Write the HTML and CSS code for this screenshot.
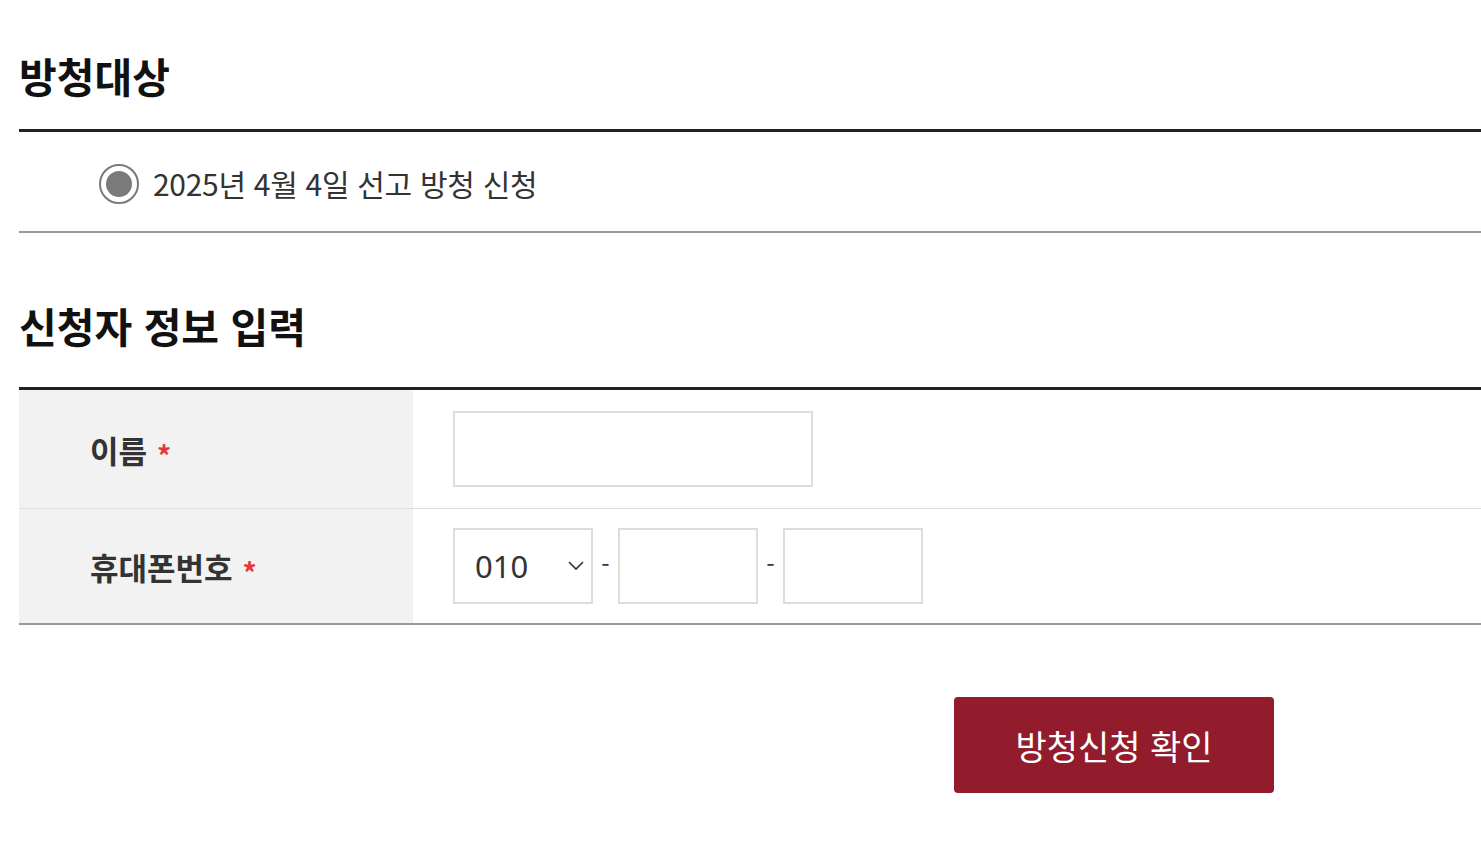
FILE: index.html
```html
<!DOCTYPE html>
<html lang="ko">
<head>
  <meta charset="UTF-8" />
  <title>방청신청</title>
  <link rel="stylesheet" href="styles.css">
</head>
<body>
<div class="wrap">
  <h2 class="sec-title">방청대상</h2>
  <div class="target-box">
    <label class="radio-item">
      <span class="radio-mark"><span class="radio-dot"></span></span>
      <span class="radio-text">2025년 4월 4일 선고 방청 신청</span>
    </label>
  </div>

  <h2 class="sec-title second">신청자 정보 입력</h2>
  <div class="form-table">
    <div class="form-row">
      <div class="form-th">이름 <span class="req">*</span></div>
      <div class="form-td">
        <input type="text" class="inp inp-name" />
      </div>
    </div>
    <div class="form-row">
      <div class="form-th">휴대폰번호 <span class="req">*</span></div>
      <div class="form-td">
        <div class="sel-wrap">
          <select class="sel">
            <option>010</option>
            <option>011</option>
            <option>016</option>
          </select>
          <svg class="sel-arrow" width="18" height="12" viewBox="0 0 18 12"><path d="M2 3 L9 10 L16 3" fill="none" stroke="#333" stroke-width="1.6"/></svg>
        </div>
        <span class="dash">-</span>
        <input type="text" class="inp inp-tel" />
        <span class="dash">-</span>
        <input type="text" class="inp inp-tel" />
      </div>
    </div>
  </div>

  <div class="btn-area">
    <button class="btn-submit">방청신청 확인</button>
  </div>
</div>
</body>
</html>
```

FILE: styles.css
```css
html, body {
  margin: 0;
  padding: 0;
  background: #fff;
  font-family: "Noto Sans CJK KR", "Noto Sans", sans-serif;
  color: #333;
}

.wrap {
  margin-left: 19px;
  padding-top: 47px;
}

.sec-title {
  margin: 0;
  font-size: 41px;
  font-weight: 700;
  color: #111;
  line-height: 56px;
  padding-bottom: 26px;
  border-bottom: 3px solid #222;
}

.sec-title.second {
  margin-top: 64px;
  padding-bottom: 34px;
}

.target-box {
  height: 97px;
  padding-top: 2px;
  display: flex;
  align-items: center;
  padding-left: 80px;
  border-bottom: 2px solid #999;
}

.radio-item {
  display: flex;
  align-items: center;
  gap: 14px;
}

.radio-mark {
  width: 36px;
  height: 36px;
  border: 2px solid #7a7a7a;
  border-radius: 50%;
  display: flex;
  align-items: center;
  justify-content: center;
  margin-top: 2px;
}

.radio-dot {
  width: 26px;
  height: 26px;
  border-radius: 50%;
  background: #7a7a7a;
}

.radio-text {
  font-size: 30px;
  color: #333;
  letter-spacing: -0.3px;
}

.form-table {
  border-bottom: 2px solid #999;
}

.form-row {
  display: flex;
  height: 118px;
}

.form-row + .form-row {
  border-top: 1px solid #ddd;
  height: 114px;
}

.form-th {
  width: 323px;
  flex: 0 0 auto;
  background: #f2f2f2;
  padding-left: 71px;
  display: flex;
  align-items: center;
  font-size: 31px;
  font-weight: 700;
  color: #333;
}

.req {
  color: #e4393c;
  font-size: 28px;
  margin-left: 10px;
  padding-top: 12px;
}

.form-td {
  flex: 1;
  display: flex;
  align-items: center;
  padding-left: 40px;
}

.inp {
  box-sizing: border-box;
  height: 76px;
  border: 2px solid #ddd;
  background: #fff;
  font-size: 28px;
  outline: none;
  padding: 0 18px;
  font-family: inherit;
}

.inp-name {
  width: 360px;
}

.inp-tel {
  width: 140px;
}

.sel-wrap {
  position: relative;
  width: 140px;
  height: 76px;
}

.sel {
  appearance: none;
  -webkit-appearance: none;
  box-sizing: border-box;
  width: 100%;
  height: 100%;
  border: 2px solid #ddd;
  background: #fff;
  padding: 0 0 0 20px;
  font-family: "Noto Sans", sans-serif;
  font-size: 31px;
  color: #333;
  outline: none;
}

.sel-arrow {
  position: absolute;
  right: 8px;
  top: 31px;
}

.dash {
  width: 25px;
  text-align: center;
  font-size: 24px;
  color: #333;
  padding-bottom: 6px;
}

.btn-area {
  padding: 72px 0 60px 935px;
}

.btn-submit {
  width: 320px;
  height: 96px;
  border: none;
  border-radius: 4px;
  background: #921b2c;
  color: #fff;
  font-family: inherit;
  font-size: 34px;
  cursor: pointer;
}
```
